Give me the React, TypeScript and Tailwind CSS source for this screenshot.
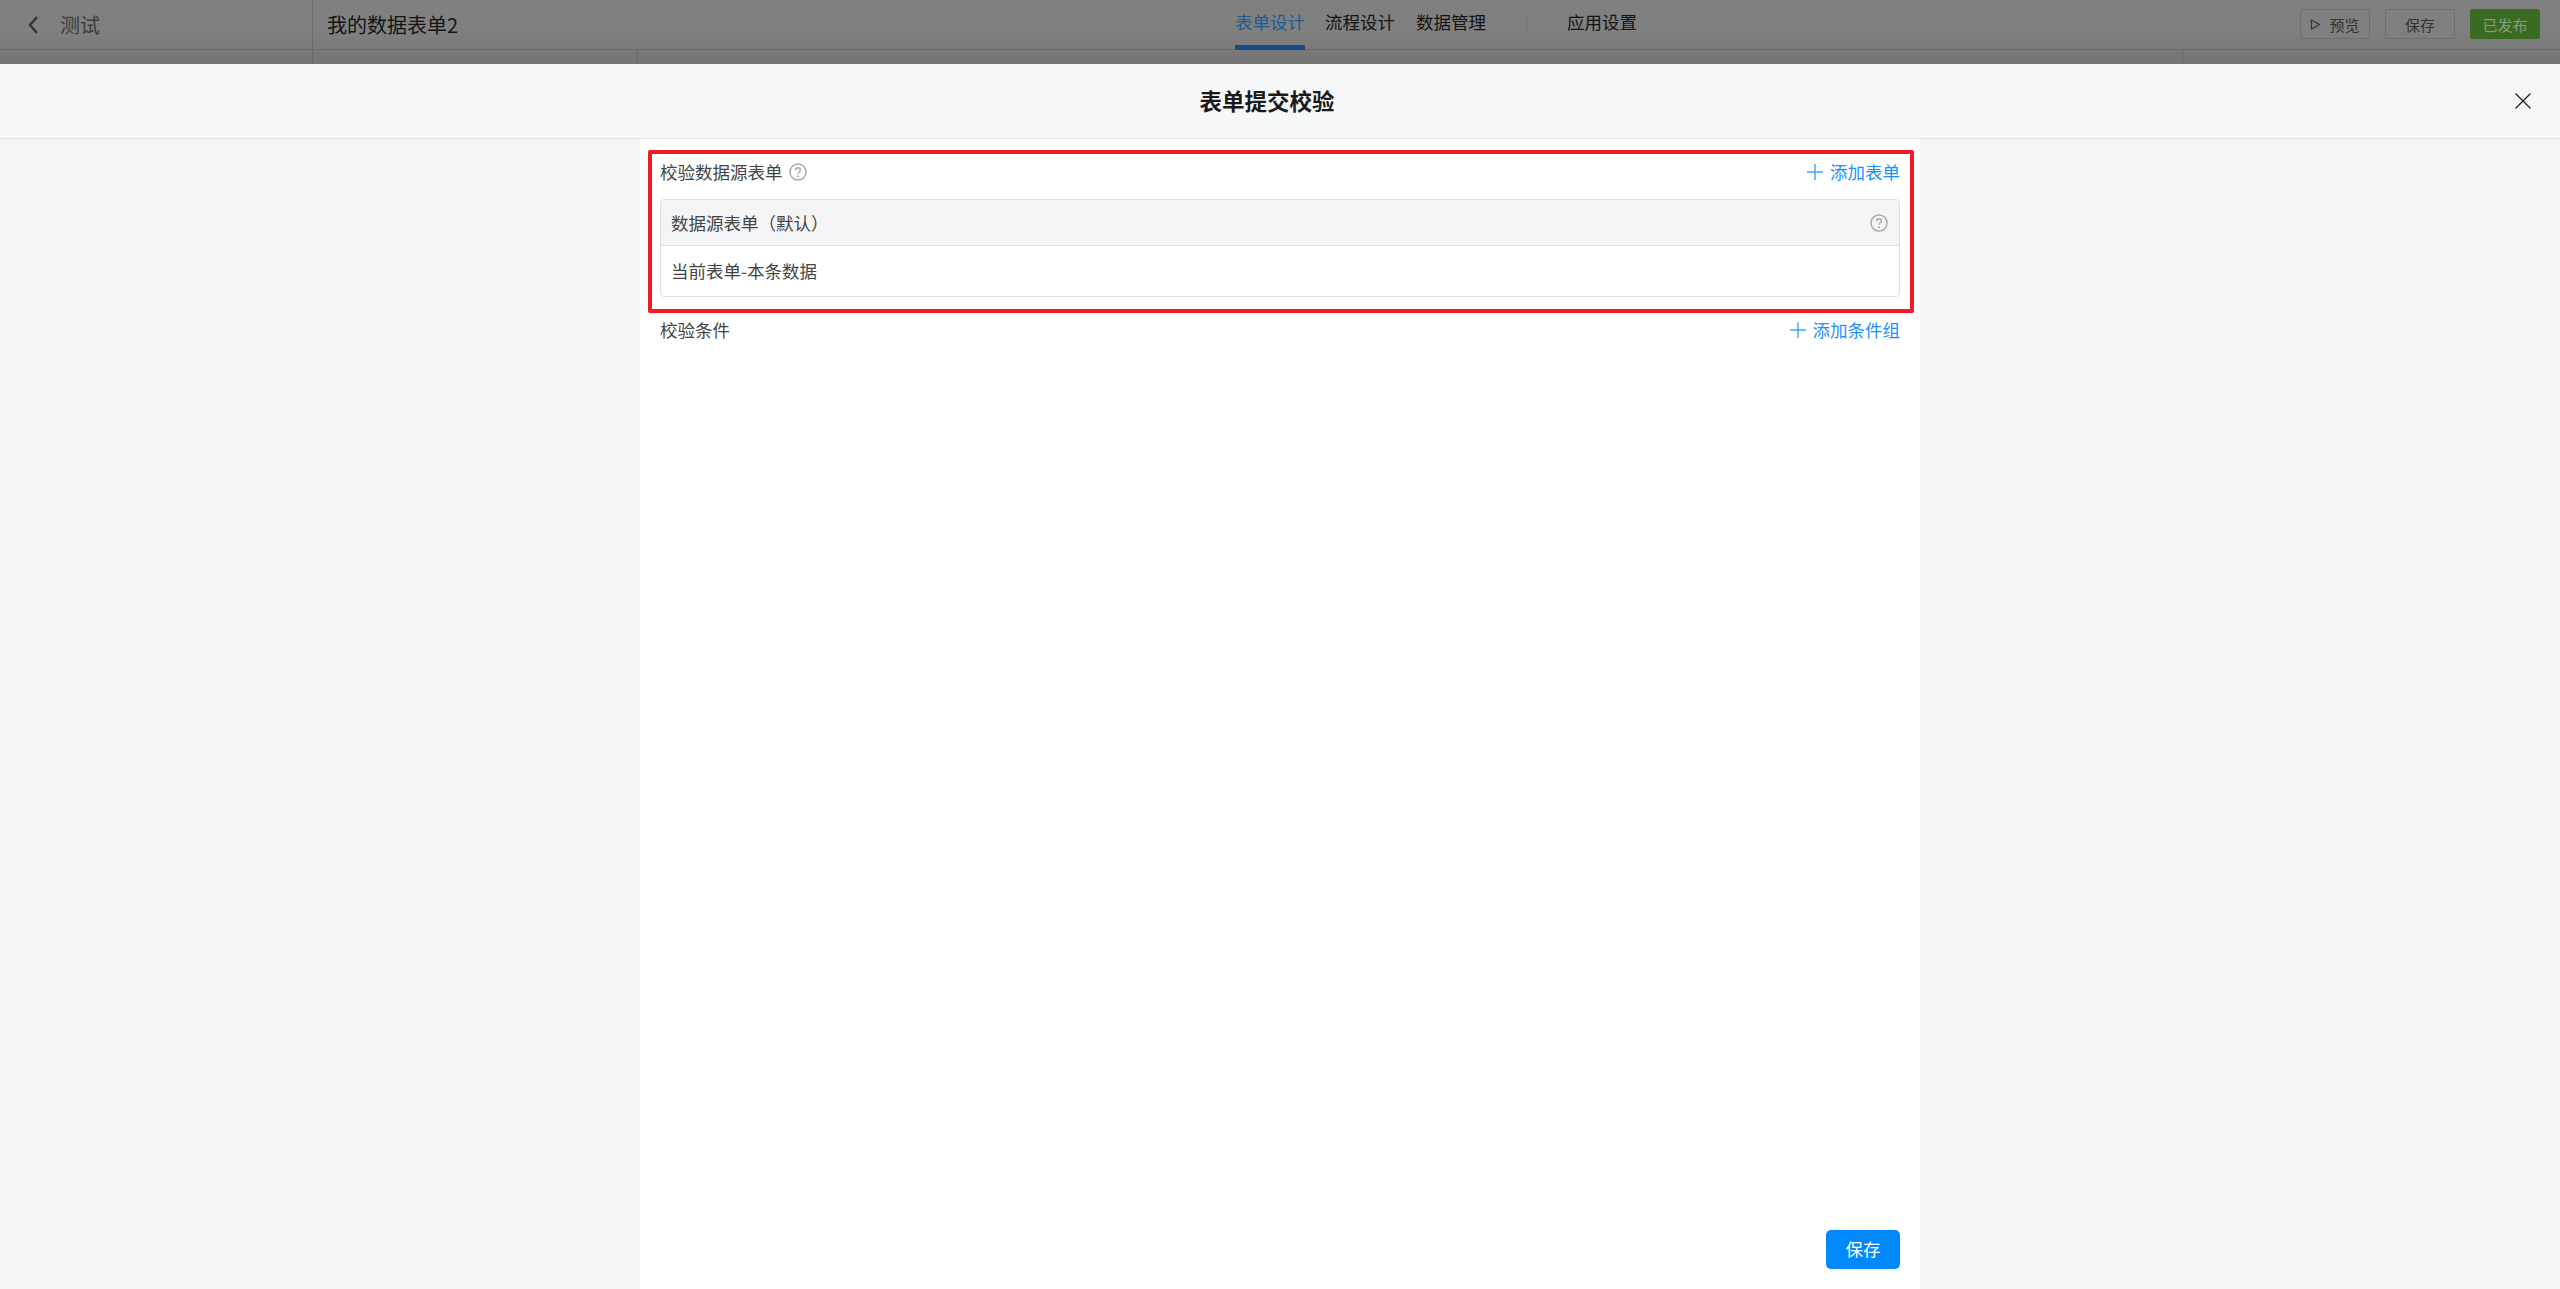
import React from "react";

const font = { fontFamily: '"Noto Sans CJK SC", "Liberation Sans", sans-serif' };

function Help({ className }: { className?: string }) {
  return (
    <svg viewBox="0 0 18 18" className={className} fill="none" stroke="#a8a8a8">
      <circle cx="9" cy="9" r="8" strokeWidth="1.4" />
      <path d="M6.6 7.2c0-1.4 1-2.4 2.4-2.4s2.4 1 2.4 2.2c0 1.100-.7 1.500-1.300 2-.7.5-1.100.9-1.100 1.700" strokeWidth="1.400" />
      <circle cx="9" cy="13.300" r=".6" fill="#a8a8a8" strokeWidth="1" />
    </svg>
  );
}

function Plus() {
  return (
    <svg viewBox="0 0 16 16" className="w-4 h-4 mr-[7px]" stroke="#3fa2ff" strokeWidth="1.4">
      <path d="M8 0v16M0 8h16" />
    </svg>
  );
}

function AddLink({ children }: { children: React.ReactNode }) {
  return (
    <div className="flex items-center text-[17.5px] text-[#1890ff]">
      <Plus />
      {children}
    </div>
  );
}

function TopButton({ children, className }: { children: React.ReactNode; className?: string }) {
  return (
    <div className={"h-[30px] w-[70px] rounded-[2px] border flex items-center justify-center text-[15px] " + className}>
      {children}
    </div>
  );
}

export default function App() {
  return (
    <div style={font} className="w-[2560px] h-[1289px] overflow-hidden flex flex-col bg-[#f4f4f7] leading-none">
      <div className="h-[64px] shrink-0 bg-gradient-to-b from-[#808080] via-[#808080] to-[#747474]">
        <div className="h-[50px] flex border-b border-[#6c6c6c]">
          <div className="w-[313px] shrink-0 border-r border-[#6c6c6c] flex items-center pl-[27px]">
            <svg viewBox="0 0 12 20" className="w-[12px] h-[20px] mr-[21px]" fill="none" stroke="#333" strokeWidth="2.4">
              <path d="M10 2 3 10l7 8" />
            </svg>
            <span className="text-[20px] text-[#3c3c3c]">测试</span>
          </div>
          <div className="pl-[14px] flex items-center text-[20px] text-[#141414] w-[922px] shrink-0">我的数据表单2</div>
          <div className="flex text-[17.5px] text-[#131313] h-[50px]">
            <div className="w-[70px] h-[50px] border-b-[5px] border-[#154c88] text-[#1e5a96] flex items-center justify-center pb-[2px]">表单设计</div>
            <div className="w-[70px] ml-[20px] flex items-center justify-center pb-[7px]">流程设计</div>
            <div className="w-[70px] ml-[21px] flex items-center justify-center pb-[7px]">数据管理</div>
            <div className="w-px h-[14px] bg-[#737373] ml-[40px] mt-[17px]" />
            <div className="w-[70px] ml-[40px] flex items-center justify-center pb-[7px]">应用设置</div>
          </div>
          <div className="ml-auto flex items-center gap-[15px] pr-[20px] pb-[1px]">
            <TopButton className="border-[#6f6f6f] text-[#333]">
              <svg viewBox="0 0 12 12" className="w-[11px] h-[11px] mr-[8px]" fill="none" stroke="#333" strokeWidth="1.2">
                <path d="M1.500 1v10L10.500 6z" />
              </svg>
              预览
            </TopButton>
            <TopButton className="border-[#6f6f6f] text-[#333]">保存</TopButton>
            <TopButton className="border-[#3a6b23] bg-[#3a6b23] text-[#8b9c82]">已发布</TopButton>
          </div>
        </div>
        <div className="h-[14px] flex">
          <div className="w-[313px] border-r border-[#686868]" />
          <div className="w-[325px] border-r border-[#686868]" />
          <div className="w-[1545px] border-r border-[#686868]" />
        </div>
      </div>

      <div className="h-[75px] shrink-0 bg-[#f6f7f9] border-b border-[#e3e4e6] relative flex items-center justify-center">
        <span className="text-[22.5px] font-bold text-[#1a1a1a] pb-[2px] pr-[26px]">表单提交校验</span>
        <svg viewBox="0 0 16 16" className="absolute right-[29px] top-[29px] w-4 h-4" stroke="#222" strokeWidth="1.3">
          <path d="M.5.5l15 15M15.500.5l-15 15" />
        </svg>
      </div>

      <div className="flex-1 flex justify-center min-h-0">
        <div className="w-[1280px] bg-white flex flex-col pt-[11px]">
          <div className="ml-2 w-[1266px] border-4 border-[#ee1c25] rounded-[2px] pl-2 pr-[10px]">
            <div className="h-[36px] flex items-center justify-between text-[17.5px] text-[#444]">
              <div className="flex items-center">
                校验数据源表单
                <Help className="w-[18px] h-[18px] ml-[6px]" />
              </div>
              <AddLink>添加表单</AddLink>
            </div>
            <div className="mt-[9px] mb-[12px] border border-[#dfe0e4] rounded-[4px] text-[17.5px] text-[#444] overflow-hidden">
              <div className="h-[46px] bg-[#f4f4f7] border-b border-[#dfe0e4] flex items-center justify-between pl-[10px] pr-[11px]">
                数据源表单（默认）
                <Help className="w-[18px] h-[18px]" />
              </div>
              <div className="h-[50px] flex items-center pl-[10px]">当前表单-本条数据</div>
            </div>
          </div>
          <div className="h-[34px] pl-[20px] pr-[20px] flex items-center justify-between text-[17.5px] text-[#444]">
            校验条件
            <AddLink>添加条件组</AddLink>
          </div>
          <div className="mt-auto self-end mr-[20px] mb-[20px] w-[74px] h-[39px] rounded-[5px] bg-[#0089ff] text-white text-[17.5px] flex items-center justify-center pb-[2px]">
            保存
          </div>
        </div>
      </div>
    </div>
  );
}
